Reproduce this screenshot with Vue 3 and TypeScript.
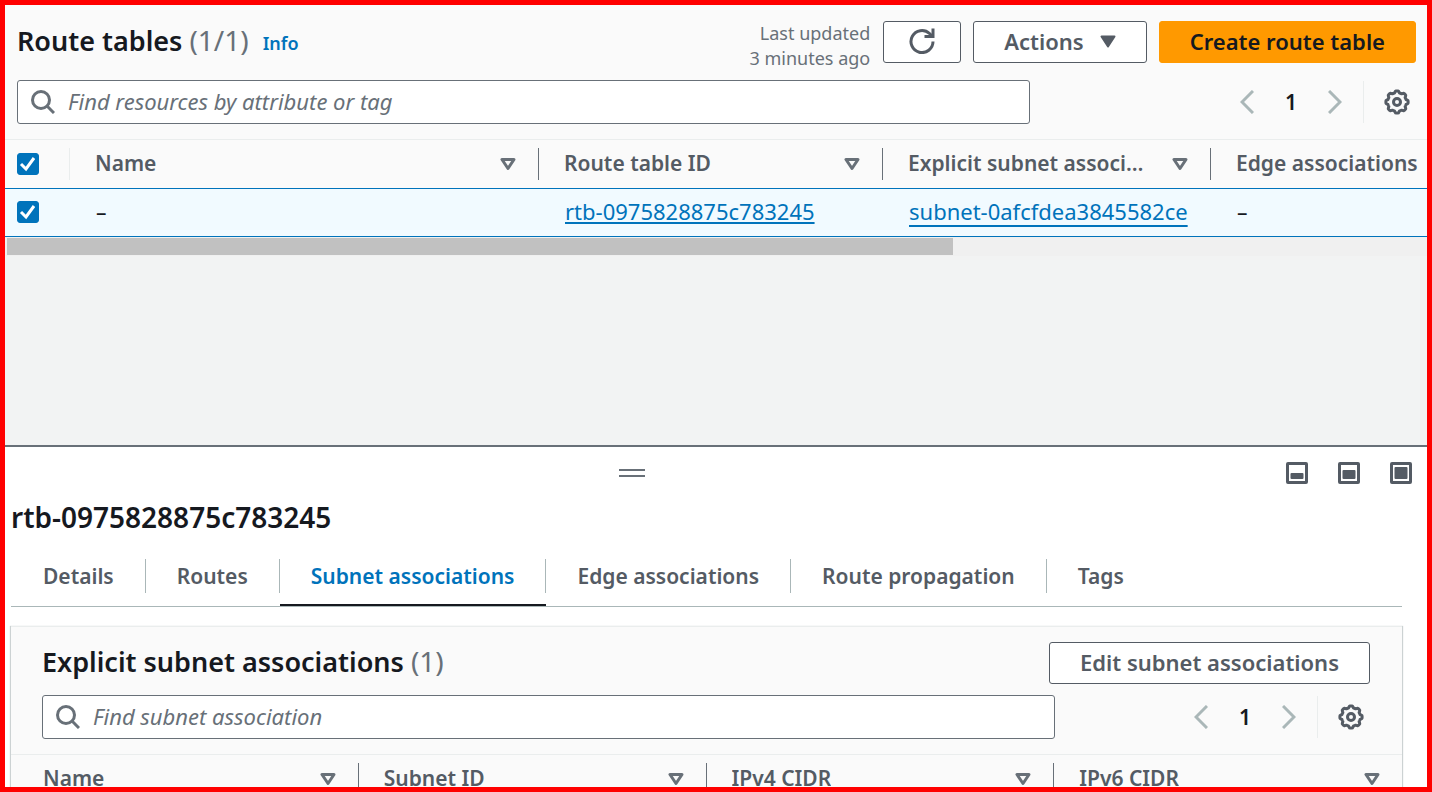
<script setup lang="ts">
import { ref } from 'vue'

interface Column {
  label: string
  key: string
  sortable: boolean
}

const routeColumns: Column[] = [
  { label: 'Name', key: 'name', sortable: true },
  { label: 'Route table ID', key: 'id', sortable: true },
  { label: 'Explicit subnet associations', key: 'subnet', sortable: true },
  { label: 'Edge associations', key: 'edge', sortable: false },
]
const subnetColumns: string[] = ['Name', 'Subnet ID', 'IPv4 CIDR', 'IPv6 CIDR']
const tabs: string[] = [
  'Details',
  'Routes',
  'Subnet associations',
  'Edge associations',
  'Route propagation',
  'Tags',
]

const activeTab = ref('Subnet associations')
const allSelected = ref(true)
const rowSelected = ref(true)
const resourceQuery = ref('')
const subnetQuery = ref('')

// Filled height of the split-panel glyphs, as y offset and height in a 22-unit box
const panelModes = [
  { name: 'Small panel', y: 11, h: 6 },
  { name: 'Medium panel', y: 8, h: 9 },
  { name: 'Full panel', y: 5, h: 12 },
]

// Gear outline: eight shallow teeth around a ring
const gearPath = (() => {
  const steps = 144
  const points: string[] = []
  for (let i = 0; i < steps; i++) {
    const a = (i / steps) * Math.PI * 2 - Math.PI / 2
    const wave = Math.max(-1, Math.min(1, Math.cos((a + Math.PI / 2) * 8) * 1.8))
    const r = 10.2 + wave * 0.9
    points.push(`${(13 + r * Math.cos(a)).toFixed(2)} ${(13 + r * Math.sin(a)).toFixed(2)}`)
  }
  return `M${points.join('L')}Z`
})()
</script>

<template>
  <main class="frame">
    <section class="resources">
      <header class="head">
        <div class="title-row">
          <h1 class="title">Route tables <span class="count">(1/1)</span></h1>
          <a class="info" href="#info">Info</a>
          <p class="updated">Last updated<br />3 minutes ago</p>
          <div class="actions">
            <button class="btn refresh" type="button" aria-label="Refresh">
              <svg width="26" height="26" viewBox="0 0 26 26" fill="none" stroke="#545b64" stroke-width="3">
                <path d="M24 13.500A11 11 0 1 1 20.500 5.500L23 8" />
                <path d="M24 0.500V8.500H15.500" />
              </svg>
            </button>
            <button class="btn menu" type="button">
              Actions
              <svg width="16" height="13" viewBox="0 0 16 13">
                <path d="M1.500 1.500H14.500L8 11.500Z" fill="#545b64" stroke="#545b64" stroke-width="2" stroke-linejoin="round" />
              </svg>
            </button>
            <button class="btn primary" type="button">Create route table</button>
          </div>
        </div>
        <div class="tools">
          <label class="search">
            <svg width="24" height="24" viewBox="0 0 24 24" fill="none" stroke="#687078" stroke-width="3">
              <circle cx="10" cy="10" r="8.500" />
              <path d="M16 16L23 23" />
            </svg>
            <input v-model="resourceQuery" type="text" placeholder="Find resources by attribute or tag" aria-label="Find resources by attribute or tag" />
          </label>
          <nav class="pager" aria-label="Route table pages">
            <button class="plain" type="button" aria-label="Previous page">
              <svg width="14" height="24" viewBox="0 0 14 24" fill="none" stroke="#aab7b8" stroke-width="3"><path d="M13 1L2 12L13 23" /></svg>
            </button>
            <button class="plain page" type="button">1</button>
            <button class="plain" type="button" aria-label="Next page">
              <svg width="14" height="24" viewBox="0 0 14 24" fill="none" stroke="#aab7b8" stroke-width="3"><path d="M1 1L12 12L1 23" /></svg>
            </button>
            <button class="plain gear" type="button" aria-label="Preferences">
              <svg width="26" height="26" viewBox="0 0 26 26" fill="none" stroke="#545b64" stroke-width="3">
                <path :d="gearPath" stroke-linejoin="round" />
                <circle cx="13" cy="13" r="3.500" />
              </svg>
            </button>
          </nav>
        </div>
      </header>
      <div class="table-wrap">
        <table class="grid routes">
          <colgroup>
            <col class="c-check" />
            <col class="c-name" />
            <col class="c-id" />
            <col class="c-subnet" />
            <col />
          </colgroup>
          <thead>
            <tr>
              <th class="check light">
                <input v-model="allSelected" type="checkbox" aria-label="Select all route tables" />
              </th>
              <th v-for="col in routeColumns" :key="col.key">
                <div class="th">
                  <span class="th-text">{{ col.label }}</span>
                  <svg v-if="col.sortable" width="16" height="14" viewBox="0 0 16 14">
                    <path d="M2 2.500H14L8 11.500Z" fill="none" stroke="#687078" stroke-width="3" stroke-linejoin="round" />
                  </svg>
                </div>
              </th>
            </tr>
          </thead>
          <tbody>
            <tr class="selected">
              <td class="check">
                <input v-model="rowSelected" type="checkbox" aria-label="Select rtb-0975828875c783245" />
              </td>
              <td>–</td>
              <td><a class="link" href="#rtb">rtb-0975828875c783245</a></td>
              <td><a class="link low" href="#subnet">subnet-0afcfdea3845582ce</a></td>
              <td>–</td>
            </tr>
          </tbody>
        </table>
        <div class="scrollbar"><div class="thumb"></div></div>
      </div>
    </section>

    <section class="panel">
      <div class="panel-bar">
        <div class="grip-area">
          <button class="plain" type="button" aria-label="Resize panel">
            <svg width="28" height="8" viewBox="0 0 28 8"><path d="M1 1H27M1 7H27" stroke="#687078" stroke-width="2" /></svg>
          </button>
        </div>
        <div class="modes">
          <button v-for="mode in panelModes" :key="mode.name" class="plain" type="button" :aria-label="mode.name">
            <svg width="22" height="22" viewBox="0 0 22 22">
              <rect x="1.500" y="1.500" width="19" height="19" rx="0.500" fill="none" stroke="#545b64" stroke-width="3" />
              <rect x="4.500" :y="mode.y" width="13" :height="mode.h" rx="1" fill="#545b64" />
            </svg>
          </button>
        </div>
      </div>
      <h2 class="panel-title">rtb-0975828875c783245</h2>
      <div class="panel-body">
        <div class="tabs" role="tablist">
          <button
            v-for="tab in tabs"
            :key="tab"
            class="tab"
            :class="{ active: tab === activeTab }"
            type="button"
            role="tab"
            :aria-selected="tab === activeTab"
            @click="activeTab = tab"
          >
            <span class="tab-text">{{ tab }}</span>
          </button>
        </div>
        <section class="card">
          <header class="card-head">
            <div class="title-row">
              <h3 class="title">Explicit subnet associations <span class="count">(1)</span></h3>
              <button class="btn edit" type="button">Edit subnet associations</button>
            </div>
            <div class="tools">
              <label class="search">
                <svg width="24" height="24" viewBox="0 0 24 24" fill="none" stroke="#687078" stroke-width="3">
                  <circle cx="10" cy="10" r="8.500" />
                  <path d="M16 16L23 23" />
                </svg>
                <input v-model="subnetQuery" type="text" placeholder="Find subnet association" aria-label="Find subnet association" />
              </label>
              <nav class="pager" aria-label="Subnet association pages">
                <button class="plain" type="button" aria-label="Previous page">
                  <svg width="14" height="24" viewBox="0 0 14 24" fill="none" stroke="#aab7b8" stroke-width="3"><path d="M13 1L2 12L13 23" /></svg>
                </button>
                <button class="plain page" type="button">1</button>
                <button class="plain" type="button" aria-label="Next page">
                  <svg width="14" height="24" viewBox="0 0 14 24" fill="none" stroke="#aab7b8" stroke-width="3"><path d="M1 1L12 12L1 23" /></svg>
                </button>
                <button class="plain gear" type="button" aria-label="Preferences">
                  <svg width="26" height="26" viewBox="0 0 26 26" fill="none" stroke="#545b64" stroke-width="3">
                    <path :d="gearPath" stroke-linejoin="round" />
                    <circle cx="13" cy="13" r="3.500" />
                  </svg>
                </button>
              </nav>
            </div>
          </header>
          <table class="grid subnets">
            <thead>
              <tr>
                <th v-for="label in subnetColumns" :key="label">
                  <div class="th">
                    <span class="th-text">{{ label }}</span>
                    <svg width="16" height="14" viewBox="0 0 16 14">
                      <path d="M2 2.500H14L8 11.500Z" fill="none" stroke="#687078" stroke-width="3" stroke-linejoin="round" />
                    </svg>
                  </div>
                </th>
              </tr>
            </thead>
          </table>
        </section>
      </div>
    </section>
  </main>
</template>

<style>
body {
  margin: 0;
}
</style>

<style scoped>
.frame,
.frame * {
  box-sizing: border-box;
}
.frame {
  display: flex;
  flex-direction: column;
  height: 100vh;
  border: 5px solid #ff0000;
  overflow: hidden;
  background: #f2f3f3;
  color: #16191f;
  font-family: "Noto Sans", "Open Sans", sans-serif;
  font-size: 21px;
  line-height: 28px;
}
button,
input {
  font: inherit;
  color: inherit;
}
svg {
  display: block;
  flex: none;
}
.resources {
  flex: 440 1 0;
  min-height: 0;
  overflow: hidden;
}
.head {
  padding: 16px 11px 15px 12px;
  background: #fafafa;
  border-bottom: 1px solid #eaeded;
}
.title-row {
  display: flex;
  align-items: center;
  height: 42px;
}
.title,
.panel-title {
  margin: 0;
  font-size: 27px;
  line-height: 36px;
  font-weight: 600;
  white-space: nowrap;
}
.title {
  padding-bottom: 4px;
}
.count {
  font-size: 28px;
  font-weight: 400;
  color: #687078;
}
.info {
  margin-left: 14px;
  padding-top: 2px;
  font-size: 18px;
  font-weight: 600;
  color: #0073bb;
  text-decoration: none;
}
.updated {
  margin: 8px 0 0 auto;
  font-size: 18px;
  line-height: 25px;
  text-align: right;
  color: #687078;
}
.actions {
  display: flex;
  gap: 12px;
  margin-left: 13px;
}
.btn {
  display: flex;
  align-items: center;
  justify-content: center;
  height: 42px;
  padding: 0 30px 2px;
  border: 1px solid #545b64;
  border-radius: 3px;
  background: #fff;
  color: #545b64;
  font-size: 22px;
  font-weight: 600;
  white-space: nowrap;
}
.refresh {
  padding: 0 25px 2px;
}
.menu {
  gap: 16px;
}
.primary {
  border-color: #ff9900;
  background: #ff9900;
  color: #16191f;
}
.tools {
  display: flex;
  align-items: center;
  justify-content: space-between;
  gap: 40px;
  margin-top: 17px;
}
.search {
  display: flex;
  flex: 0 1 1013px;
  align-items: center;
  gap: 13px;
  height: 44px;
  padding: 0 13px;
  border: 1px solid #687078;
  border-radius: 3px;
  background: #fff;
  font-size: 22px;
}
.search input {
  flex: 1;
  min-width: 0;
  padding: 0 0 2px;
  border: 0;
  outline: 0;
  background: none;
}
.search input::placeholder {
  color: #687078;
  font-style: italic;
  opacity: 1;
}
.plain {
  display: flex;
  padding: 0;
  border: 0;
  background: none;
}
.pager {
  display: flex;
  align-items: center;
}
.page {
  width: 74px;
  justify-content: center;
  font-weight: 600;
}
.gear {
  align-items: center;
  height: 42px;
  margin-left: 21px;
  padding: 0 6px 0 20px;
  border-left: 1px solid #eaeded;
}
.grid {
  width: 100%;
  table-layout: fixed;
  border-collapse: separate;
  border-spacing: 0;
  background: #fafafa;
}
.c-check {
  width: 65px;
}
.c-name {
  width: 469px;
}
.c-id {
  width: 344px;
}
.c-subnet {
  width: 328px;
}
th,
td {
  height: 48px;
  padding: 0;
  text-align: left;
  white-space: nowrap;
}
th {
  color: #545b64;
  font-weight: 600;
}
td {
  height: 49px;
  padding: 0 0 2px 26px;
  border-top: 1px solid #0073bb;
  border-bottom: 1px solid #0073bb;
  background: #f1faff;
}
.check {
  padding-left: 12px;
}
.th {
  display: flex;
  align-items: center;
  justify-content: space-between;
  gap: 20px;
  height: 32px;
  padding: 0 22px 0 25px;
  border-right: 1px solid #687078;
}
th:last-child .th {
  border-right: 0;
}
.routes th:last-child .th {
  padding-right: 0;
}
.th-text {
  padding-bottom: 2px;
  overflow: hidden;
  text-overflow: ellipsis;
}
.light {
  background: linear-gradient(#eaeded, #eaeded) right center / 1px 32px no-repeat;
}
input[type="checkbox"] {
  display: block;
  appearance: none;
  width: 22px;
  height: 22px;
  margin: 0;
  border: 1px solid #687078;
  border-radius: 3px;
  background: #fff;
}
input[type="checkbox"]:checked {
  border-color: #0073bb;
  background: #0073bb url("data:image/svg+xml,%3Csvg xmlns='http://www.w3.org/2000/svg' viewBox='0 0 20 20'%3E%3Cpath d='M3 10l5 5L16 4' fill='none' stroke='white' stroke-width='3'/%3E%3C/svg%3E") center / 20px 20px no-repeat;
}
.link {
  color: #0073bb;
  font-size: 22px;
  text-decoration: underline;
  text-decoration-thickness: 2px;
  text-decoration-skip-ink: none;
  text-underline-offset: 2px;
}
.low {
  text-underline-offset: 5px;
}
.scrollbar {
  padding: 1px 2px;
  background: #f0f0f0;
}
.thumb {
  width: 66.7%;
  height: 17px;
  background: #c1c1c1;
}
.panel {
  flex: 340 1 0;
  min-height: 0;
  overflow: hidden;
  border-top: 2px solid #687078;
  background: #fff;
}
.panel-bar {
  display: flex;
  align-items: center;
  padding: 15px 15px 0 0;
}
.grip-area {
  display: flex;
  flex: 1;
  justify-content: center;
}
.modes {
  display: flex;
  gap: 30px;
  margin-left: 27px;
}
.panel-title {
  margin: 15px 6px 0;
  font-size: 28px;
}
.panel-body {
  padding: 15px 25px 0 6px;
}
.tabs {
  display: flex;
  padding-left: 1px;
  border-bottom: 1px solid #aab7b8;
}
.tab {
  height: 56px;
  padding: 9px 0 11px;
  border: 0;
  border-bottom: 2px solid transparent;
  background: none;
  color: #545b64;
  font-weight: 600;
}
.tab-text {
  display: block;
  padding: 3px 31px;
  border-right: 1px solid #aab7b8;
}
.tab:last-child .tab-text {
  border-right: 0;
}
.active {
  border-bottom-color: #16191f;
  color: #0073bb;
}
.card {
  margin-top: 19px;
  border-top: 1px solid #eaeded;
  box-shadow: 0 1px 1px 1px rgba(0, 28, 36, 0.2);
  background: #fafafa;
}
.card-head {
  padding: 15px 32px 15px 31px;
  border-bottom: 1px solid #eaeded;
}
.card-head .tools {
  margin-top: 11px;
}
.edit {
  margin-left: auto;
}
.subnets th:first-child .th {
  padding-left: 32px;
}
</style>
